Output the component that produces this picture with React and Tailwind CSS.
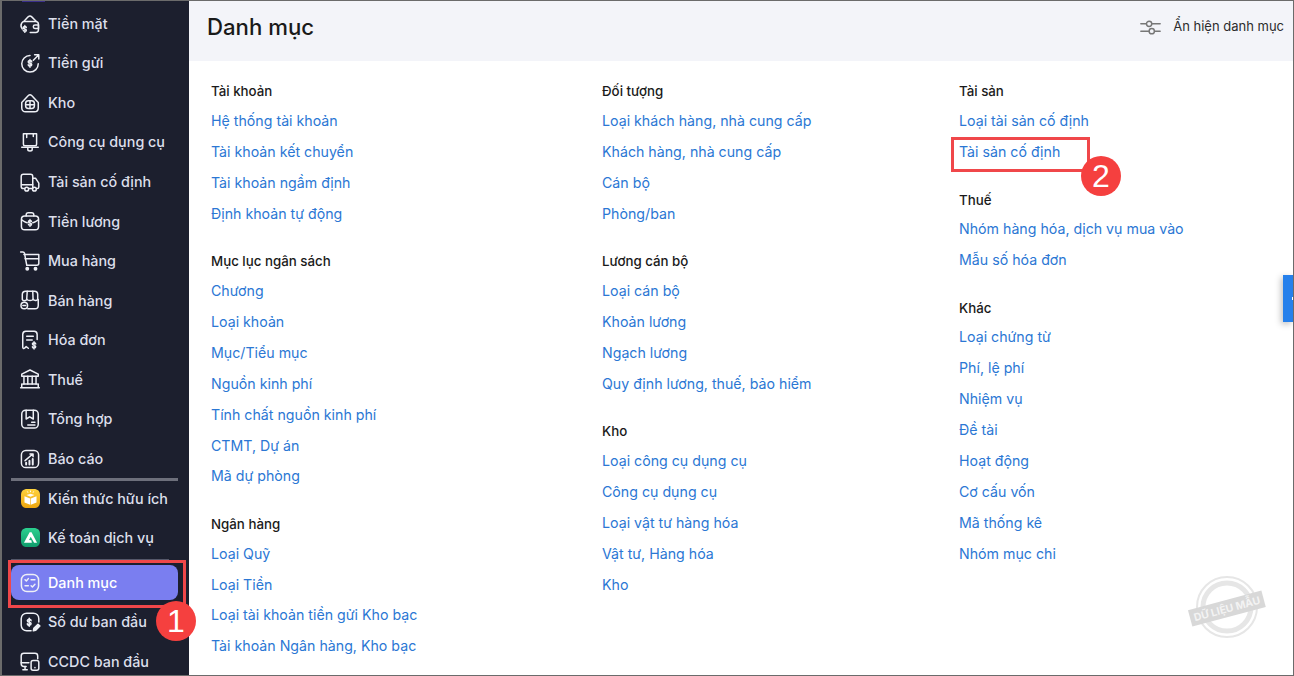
const Dollar = ({ x, y, s = 1 }) => (
  <path transform={`translate(${x} ${y}) scale(${s})`} d="M2 .8C1 .8.4 1.3.4 2s.6 1.1 1.6 1.3 1.6.6 1.6 1.3S3 5.8 2 5.8 .4 5.300.4 4.600M3.600 2C3.600 1.300 3 .8 2 .8M2-.2v7" />
);

const I = ({ children }) => (
  <svg viewBox="0 0 20 20" fill="none" stroke="currentColor" strokeWidth="1.35" strokeLinecap="round" strokeLinejoin="round" className="w-[22px] h-[22px] shrink-0 text-[#eef0f6]">
    {children}
  </svg>
);

const icons = {
  cash: <I><path d="M4.500 7.500 8.300 3.500c1-.9 2.400-.9 3.300 0l4 4" /><path d="M3 14.500C1.800 13 1.500 11 2.300 9.500c.5-1 1.400-1.700 2.700-1.700h10c1.600 0 2.700 1.200 2.700 2.700v4.700c0 1.400-1 2.500-2.500 2.500h-5" /><path d="M14.500 11h3.200v3h-3.200c-.8 0-1.500-.7-1.500-1.500s.7-1.500 1.500-1.500Z" /><Dollar x={3.500} y={11.500} s={0.9} /></I>,
  deposit: <I><path d="M10 3.200a7.500 7.500 0 1 0 7.500 7.500" /><Dollar x={8} y={7} /><path d="M13 7.500 18 2.500M14.200 2.500H18v3.800" /></I>,
  box: <I><path d="M2.500 9.500 8.500 3.200c.8-.8 2.200-.8 3 0l6 6.300v5c0 2-1.500 3.500-3.500 3.500H6c-2 0-3.500-1.500-3.500-3.500Z" /><rect x="6" y="8" width="8" height="7" rx="2.500" /><path d="M10 8v7M6 11.500h8" /></I>,
  tools: <I><path d="M4 2.500h12v9.500c0 .8-.6 1.400-1.400 1.400H5.400C4.600 13.400 4 12.800 4 12Z" /><path d="M7 2.500v3.500M13 2.500v2.500" /><path d="M2.500 14.800h15M8 15v1.800c0 .7 1 1.300 2 1.300s2-.6 2-1.300V15" /></I>,
  truck: <I><path d="M5 16H4c-1.200 0-2-.9-2-2V5c0-1.200.9-2 2-2h6.500c1.200 0 2 .9 2 2v11H9" /><path d="M12.500 6.500H15l3 4.500v3.500c0 .9-.6 1.500-1.500 1.500H16" /><path d="M2.500 12.500h10" /><circle cx="7" cy="16.500" r="1.700" /><circle cx="14" cy="16.500" r="1.700" /></I>,
  salary: <I><rect x="2.200" y="5.500" width="15.600" height="12.500" rx="3" /><path d="M6.500 5.500V4.500c0-1.200.9-2 2-2h3c1.200 0 2 .9 2 2v1M2.500 9c3 2 4.500 2.500 5 2.500M17.500 9c-3 2-4.500 2.500-5 2.500" /><Dollar x={8.200} y={8.800} s={0.9} /></I>,
  cart: <I><path d="M1.500 1.800h2c.8 0 1.300.4 1.500 1.100L7 13.500" /><path d="M4.500 4h13.500v8c0 1-.8 1.800-1.800 1.800H7" /><path d="M5.500 8h12.200" /><circle cx="7.500" cy="17" r="1.100" fill="currentColor" /><circle cx="15" cy="17" r="1.100" fill="currentColor" /></I>,
  shop: <I><path d="M3 9.500V5c0-1.800 1.300-3 3-3h8c1.800 0 3 1.300 3 3v4c0 1.500-2.800 2-4.200.4-1 1.400-4.500 1.400-5.600 0C6 11 3.500 11 3 9.500Z" /><path d="M7.500 2 7 9.500M12.500 2l.3 7.500M17.500 9.500V15c0 1.800-1.300 3-3 3H8" /><circle cx="4.800" cy="15" r="3" /><path d="M3.500 15h2.600" /></I>,
  invoice: <I><path d="M8.500 17.500 6.500 16l-1.500 1.500c-.7.500-1.600 0-1.600-.8V5c0-1.700 1.100-3 2.800-3h7.600c1.700 0 2.700 1.300 2.700 3v4.500" /><path d="M7 6.500h6M7 10h5" /><Dollar x={11.800} y={11.800} s={0.95} /></I>,
  bank: <I><path d="M10 1.800 2.500 5.500v2h15v-2Z" /><path d="M4.500 7.500v7M8 7.500v7M12 7.500v7M15.500 7.500v7" /><path d="M3.500 14.500h13M1.500 18h17M2.500 14.500V18M17.500 14.500V18" /></I>,
  summary: <I><rect x="2.500" y="2" width="15" height="16.200" rx="3.500" /><path d="M6.500 2v8l3.200-2 3.300 2V2" /><path d="M11.500 13h3M8 15.500h6.500" /></I>,
  report: <I><rect x="2.200" y="2.200" width="15.600" height="15.600" rx="4" /><path d="M5.500 11.500 12.500 5.500M10 5.500h2.800v2.500" /><path d="M6.500 15v-1.500M9.500 15v-3.500M12.500 15v-5" strokeWidth="1.800" /></I>,
  list: <I><rect x="2.200" y="2.200" width="15.600" height="15.600" rx="5" /><path d="M5.500 7 6.700 8.200 8.500 6M11 7h3.500M5.500 12.500h3M11 12.500l1.200 1.200 2.300-2.500" /></I>,
  opening: <I><path d="M18 10V7c0-2.800-2-5-5-5H7C4.200 2 2 4.200 2 7v6c0 2.800 2.200 5 5 5h4" /><Dollar x={7.200} y={6.800} s={1.05} /><path d="M13 18l.5-2.200 3.800-3.800 1.700 1.700-3.800 3.800Z" fill="currentColor" /></I>,
  ccdc: <I><path d="M6.500 15H4.500C3 15 2 14 2 12.500v-7C2 4 3 3 4.500 3h10C16 3 17 4 17 5.500V8" /><path d="M2 11.500h7M5.500 15v3M3.500 18h4" /><rect x="11" y="9.500" width="7" height="9" rx="1.800" /><path d="M14.500 16v.100" /></I>,
  gold: (
    <svg viewBox="0 0 18 18" className="w-[19px] h-[19px] shrink-0 mx-[1.500px]">
      <defs>
        <linearGradient id="goldFill" x1="0" y1="0" x2="0" y2="1">
          <stop offset="0" stopColor="#ffd33d" />
          <stop offset="1" stopColor="#eda50e" />
        </linearGradient>
      </defs>
      <path d="M6 0h6c4 0 6 2 6 6v6c0 4-2 6-6 6H6c-4 0-6-2-6-6V6c0-4 2-6 6-6Z" fill="url(#goldFill)" />
      <path d="M3.300 6.800 8.700 9v6L3.300 12.700Z M14.700 6.800 9.300 9v6l5.400-2.300Z" fill="#fff" />
      <path d="M5.200 5.800 9 4.400l3.800 1.400L9 7.400Z" fill="#fff" opacity=".95" />
      <path d="M9 1.500v1.500M6 2.300l.6 1.200M12 2.300l-.6 1.200" stroke="#fff" strokeWidth=".9" />
    </svg>
  ),
  green: (
    <svg viewBox="0 0 18 18" className="w-[19px] h-[19px] shrink-0 mx-[1.500px]">
      <defs>
        <linearGradient id="greenFill" x1="0" y1="0" x2="0" y2="1">
          <stop offset="0" stopColor="#2bd08f" />
          <stop offset="1" stopColor="#0f9c6c" />
        </linearGradient>
      </defs>
      <path d="M6 0h6c4 0 6 2 6 6v6c0 4-2 6-6 6H6c-4 0-6-2-6-6V6c0-4 2-6 6-6Z" fill="url(#greenFill)" />
      <path d="M2.800 14 8.200 4h1.800l5.200 10h-2.800L9.200 8.300 7.600 11.400l2.200.2.500 2.400Z" fill="#fff" />
    </svg>
  ),
};

const Row = ({ icon, label }) => (
  <div className="h-[39.55px] shrink-0 flex items-center pl-[17px] gap-[7px] text-[14.35px] font-medium text-[#dcdfeb] whitespace-nowrap">
    {icons[icon]}
    <span>{label}</span>
  </div>
);

const Group = ({ title, links }) => (
  <div className="mb-[18.4px]">
    <div className="h-[28px] pt-[2px] flex items-center text-[13.3px] font-medium text-[#1a1a1a] whitespace-nowrap">{title}</div>
    {links.map((l) => (
      <div key={l} className="h-[30.9px] flex items-center text-[14.2px] text-[#2b77d4] whitespace-nowrap">{l}</div>
    ))}
  </div>
);

const Badge = ({ n, className }) => (
  <div className={`absolute w-[40px] h-[40px] rounded-full bg-[#f5403f] text-white text-[32px] leading-none flex items-center justify-center font-['Liberation_Sans',sans-serif] ${className}`}>{n}</div>
);

export default function App() {
  return (
    <div className="relative w-[1294px] h-[676px] overflow-hidden flex bg-white border-t border-l-2 border-r border-b border-[#6b6b6b] font-['Inter','Noto_Sans',sans-serif]">
      <aside className="w-[187px] shrink-0 bg-[#1c1f2e] flex flex-col overflow-hidden pt-[2.800px]">
        <Row icon="cash" label="Tiền mặt" />
        <Row icon="deposit" label="Tiền gửi" />
        <Row icon="box" label="Kho" />
        <Row icon="tools" label="Công cụ dụng cụ" />
        <Row icon="truck" label="Tài sản cố định" />
        <Row icon="salary" label="Tiền lương" />
        <Row icon="cart" label="Mua hàng" />
        <Row icon="shop" label="Bán hàng" />
        <Row icon="invoice" label="Hóa đơn" />
        <Row icon="bank" label="Thuế" />
        <Row icon="summary" label="Tổng hợp" />
        <Row icon="report" label="Báo cáo" />
        <div className="h-[3px] shrink-0 -mb-[2.800px] ml-[9px] w-[167px] bg-[#6d6f7b] relative z-10" />
        <Row icon="gold" label="Kiến thức hữu ích" />
        <Row icon="green" label="Kế toán dịch vụ" />
        <div className="h-[2px] shrink-0 mt-[1.500px] ml-[9px] w-[158px] bg-[#55586a]" />
        <div className="shrink-0 mt-[4px] ml-[9px] w-[167px] h-[35px] rounded-lg bg-[#7a7ef0] flex items-center pl-[8px] gap-[7px] text-[14.35px] font-medium text-white">
          {icons.list}
          <span>Danh mục</span>
        </div>
        <div className="h-[2px] shrink-0" />
        <Row icon="opening" label="Số dư ban đầu" />
        <Row icon="ccdc" label="CCDC ban đầu" />
      </aside>

      <main className="flex-1 min-w-0 flex flex-col">
        <header className="h-[60px] shrink-0 bg-[#f3f4f9] flex items-center justify-between pl-[18px] pr-[9px]">
          <h1 className="text-[22.2px] font-medium text-[#1a1a1a] -mt-[8px]">Danh mục</h1>
          <div className="flex items-center gap-[12px] text-[13px] text-[#2c2c2c] -mt-[8px]">
            <svg viewBox="0 0 20 14" fill="none" stroke="#777" strokeWidth="1.400" strokeLinecap="round" className="w-[21px] h-[15px]">
              <path d="M.8 3.500H6M11.500 3.500h7.700M.8 10.500h7.500M14 10.500h5.200" />
              <circle cx="8.700" cy="3.500" r="2.500" />
              <circle cx="11.200" cy="10.500" r="2.500" />
            </svg>
            <span>Ẩn hiện danh mục</span>
          </div>
        </header>
        <div className="flex-1 flex pt-[16.300px] pl-[22px]">
          <div className="w-[391px] shrink-0">
            <Group title="Tài khoản" links={["Hệ thống tài khoản", "Tài khoản kết chuyển", "Tài khoản ngầm định", "Định khoản tự động"]} />
            <Group title="Mục lục ngân sách" links={["Chương", "Loại khoản", "Mục/Tiểu mục", "Nguồn kinh phí", "Tính chất nguồn kinh phí", "CTMT, Dự án", "Mã dự phòng"]} />
            <Group title="Ngân hàng" links={["Loại Quỹ", "Loại Tiền", "Loại tài khoản tiền gửi Kho bạc", "Tài khoản Ngân hàng, Kho bạc"]} />
          </div>
          <div className="w-[357px] shrink-0">
            <Group title="Đối tượng" links={["Loại khách hàng, nhà cung cấp", "Khách hàng, nhà cung cấp", "Cán bộ", "Phòng/ban"]} />
            <Group title="Lương cán bộ" links={["Loại cán bộ", "Khoản lương", "Ngạch lương", "Quy định lương, thuế, bảo hiểm"]} />
            <Group title="Kho" links={["Loại công cụ dụng cụ", "Công cụ dụng cụ", "Loại vật tư hàng hóa", "Vật tư, Hàng hóa", "Kho"]} />
          </div>
          <div className="flex-1">
            <Group title="Tài sản" links={["Loại tài sản cố định", "Tài sản cố định"]} />
            <Group title="Thuế" links={["Nhóm hàng hóa, dịch vụ mua vào", "Mẫu số hóa đơn"]} />
            <Group title="Khác" links={["Loại chứng từ", "Phí, lệ phí", "Nhiệm vụ", "Đề tài", "Hoạt động", "Cơ cấu vốn", "Mã thống kê", "Nhóm mục chi"]} />
          </div>
        </div>
      </main>

      {/* annotations, overlaid on the page */}
      <div className="absolute left-[20px] top-0 w-[23px] h-[1px] bg-[#3a2f8a]" />
      <div className="absolute left-[6px] top-[559px] w-[178px] h-[48px] border-[3px] border-[#f0474a]" />
      <Badge n="1" className="left-[154px] top-[600px]" />
      <div className="absolute left-[949px] top-[136px] w-[139px] h-[35px] border-[3px] border-[#f0474a]" />
      <Badge n="2" className="left-[1079px] top-[155px]" />

      <div className="absolute right-0 top-[274px] w-[10px] h-[47px] bg-[#2680eb] shadow-[-2px_2px_6px_rgba(0,0,0,0.25)]">
        <div className="absolute right-0 top-[22px] w-[1px] h-[3px] bg-white" />
      </div>

      <svg viewBox="0 0 90 80" className="absolute left-[1183px] top-[572px] w-[90px] h-[80px]">
        <g fill="none" stroke="#e6e6e6">
          <circle cx="42" cy="34" r="30" strokeWidth="2" />
          <circle cx="42" cy="34" r="24" strokeWidth="5" />
        </g>
        <g transform="rotate(-15 42 36)">
          <rect x="4" y="27" width="76" height="17" fill="#d8d8d8" />
          <text x="42" y="39.500" textAnchor="middle" fontSize="10.500" fontWeight="700" fill="#f3f3f3" fontFamily="Inter, sans-serif">DỮ LIỆU MẪU</text>
        </g>
      </svg>
    </div>
  );
}
